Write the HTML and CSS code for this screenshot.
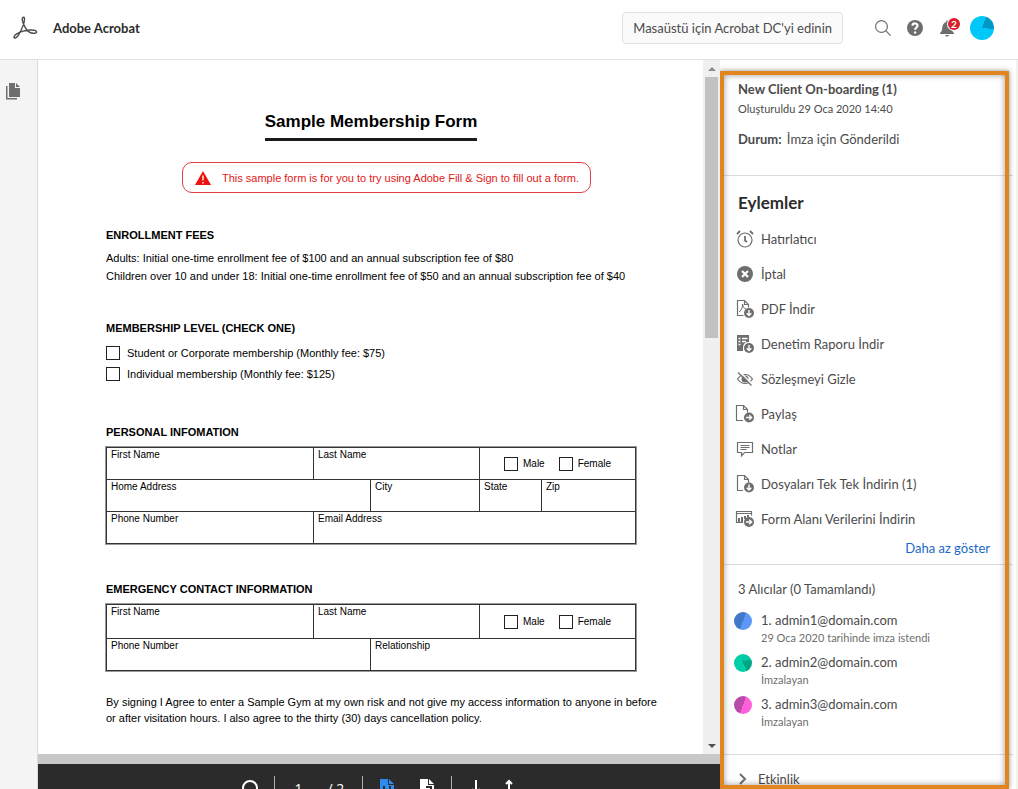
FILE: index.html
```html
<!DOCTYPE html>
<html lang="tr">
<head>
<meta charset="utf-8">
<meta name="viewport" content="width=device-width, initial-scale=1">
<title>Adobe Acrobat</title>
<link rel="stylesheet" href="styles.css">
</head>
<body>
<header class="topbar">
  <svg class="logo" viewBox="0 0 24 24" aria-hidden="true"><path d="M10.6 1.2c-1.5 0-1.7 2.1-.9 4.6.6 2 1.600 4.200 2.700 6 1.500 2.500 4.200 5 7.300 5.400 2.300.3 4-.2 3.900-1.300-.1-1.500-3-2-6.200-1.900-4.100.100-10 1.700-14.100 4.200-1.800 1.100-2.700 2.600-2.200 3.400.7 1 2.800-.1 4.500-2.800 2-3.200 4-7.400 5.200-11.400.6-2.200 1.300-6.200-.2-6.200z"/></svg>
  <span class="brand">Adobe Acrobat</span>
  <button class="get-app" type="button">Masaüstü için Acrobat DC'yi edinin</button>
  <button class="icon-btn" type="button" aria-label="Ara"><svg class="i18" viewBox="0 0 18 18"><g class="line"><circle cx="7.500" cy="7.500" r="5.900"/><path d="M11.700 11.700l5 5"/></g></svg></button>
  <button class="icon-btn" type="button" aria-label="Yardım"><svg class="i18" viewBox="0 0 18 18"><circle class="solid" cx="9" cy="9" r="8"/><path class="cut thick" d="M6.500 6.800c.1-3.200 5.200-3 5 0-.1 1.700-2.400 1.900-2.400 4"/><circle class="white" cx="9.100" cy="13.500" r="1.200"/></svg></button>
  <button class="icon-btn bell" type="button" aria-label="Bildirimler"><svg class="i18" viewBox="0 0 18 18"><path class="solid" d="M2 15v-1c1.500-1.300 2-2.300 2.200-5C4.400 5.500 6 3.300 8.200 2.900V1.600h1.600v1.300c2.200.4 3.700 2.600 3.900 6.100.2 2.700.8 3.700 2.300 5v1zM7.200 16h3.600c-.3 2-3.300 2-3.600 0z"/></svg><span class="badge">2</span></button>
  <button class="icon-btn" type="button" aria-label="Profil"><span class="avatar me"></span></button>
</header>
<main class="workspace">
  <nav class="rail">
    <button class="icon-btn" type="button" aria-label="Sayfalar"><svg class="i18" viewBox="0 0 18 18"><path class="solid" d="M2 4h1.500v12H13v1.500H2zM5 1h6v5h5v9H5zM12 1l4 4h-4z"/></svg></button>
  </nav>
  <section class="viewer">
    <div class="stage">
      <form class="sheet" lang="en">
        <h1 class="sheet-title"><span>Sample Membership Form</span></h1>
        <p class="notice"><svg class="warn" viewBox="0 0 18 16" aria-hidden="true"><path class="red" d="M9 1l8 14H1z"/><path class="cut" d="M9 5.500v5M9 12v1.500"/></svg>This sample form is for you to try using Adobe Fill &amp; Sign to fill out a form.</p>
        <h2>ENROLLMENT FEES</h2>
        <p class="fee">Adults: Initial one-time enrollment fee of $100 and an annual subscription fee of $80</p>
        <p class="fee">Children over 10 and under 18: Initial one-time enrollment fee of $50 and an annual subscription fee of $40</p>
        <h2 class="gap-s">MEMBERSHIP LEVEL (CHECK ONE)</h2>
        <label class="option"><input type="checkbox">Student or Corporate membership (Monthly fee: $75)</label>
        <label class="option"><input type="checkbox">Individual membership (Monthly fee: $125)</label>
        <h2 class="gap-l">PERSONAL INFOMATION</h2>
        <table class="fields">
          <colgroup><col class="c1"><col class="c2"><col class="c3"><col class="c4"><col class="c5"></colgroup>
          <tr><td><label for="p1">First Name</label><input id="p1" type="text"></td><td colspan="2"><label for="p2">Last Name</label><input id="p2" type="text"></td><td colspan="2" class="choice"><div class="pair"><label><input type="checkbox">Male</label><label><input type="checkbox">Female</label></div></td></tr>
          <tr><td colspan="2"><label for="p3">Home Address</label><input id="p3" type="text"></td><td><label for="p4">City</label><input id="p4" type="text"></td><td><label for="p5">State</label><input id="p5" type="text"></td><td><label for="p6">Zip</label><input id="p6" type="text"></td></tr>
          <tr><td><label for="p7">Phone Number</label><input id="p7" type="text"></td><td colspan="4"><label for="p8">Email Address</label><input id="p8" type="text"></td></tr>
        </table>
        <h2 class="gap-m">EMERGENCY CONTACT INFORMATION</h2>
        <table class="fields">
          <colgroup><col class="c1"><col class="c2"><col class="c3"><col class="c4"><col class="c5"></colgroup>
          <tr class="tall"><td><label for="e1">First Name</label><input id="e1" type="text"></td><td colspan="2"><label for="e2">Last Name</label><input id="e2" type="text"></td><td colspan="2" class="choice"><div class="pair"><label><input type="checkbox">Male</label><label><input type="checkbox">Female</label></div></td></tr>
          <tr><td colspan="2"><label for="e3">Phone Number</label><input id="e3" type="text"></td><td colspan="3"><label for="e4">Relationship</label><input id="e4" type="text"></td></tr>
        </table>
        <p class="terms">By signing I Agree to enter a Sample Gym at my own risk and not give my access information to anyone in before or after visitation hours. I also agree to the thirty (30) days cancellation policy.</p>
      </form>
      <div class="scroll"><span class="arrow up"></span><span class="thumb"></span><span class="arrow down"></span></div>
    </div>
    <div class="tools">
      <button type="button" aria-label="Bul"><svg class="i18" viewBox="0 0 18 18"><g class="wline"><circle cx="9" cy="9" r="7"/><path d="M14 14l4 4"/></g></svg></button>
      <span class="sep"></span>
      <span class="pages"><input type="text" value="1" aria-label="Sayfa"><span>/ 2</span></span>
      <span class="sep"></span>
      <button type="button" aria-label="Sayfayı sığdır"><svg class="i18" viewBox="0 0 18 18"><path class="blue" d="M2 0h8v6h6v12H2zM11 0l5 5h-5z"/><path class="darkline" d="M6 7v4M12 7v4"/></svg></button>
      <button class="wide" type="button" aria-label="Genişliğe sığdır"><svg class="i18" viewBox="0 0 18 18"><path class="white" d="M2 0h8v6h6v12H2zM11 0l5 5h-5z"/><path class="darkline" d="M8 8h5v5"/></svg></button>
      <span class="sep"></span>
      <button type="button" aria-label="Sonraki sayfa"><svg class="i18" viewBox="0 0 18 18"><path class="wline" d="M9 1v14M5 10l4 5 4-5"/></svg></button>
      <button type="button" aria-label="Önceki sayfa"><svg class="i18" viewBox="0 0 18 18"><path class="wline" d="M9 17V2M6 5l3-3 3 3"/></svg></button>
    </div>
  </section>
  <aside class="panel">
    <section class="block summary">
      <h2>New Client On-boarding (1)</h2>
      <p class="created">Oluşturuldu 29 Oca 2020 14:40</p>
      <p class="status"><strong>Durum:</strong> İmza için Gönderildi</p>
    </section>
    <section class="block actions">
      <h3>Eylemler</h3>
      <ul>
        <li><button type="button"><svg class="i18" viewBox="0 0 18 18"><g class="line"><circle cx="9" cy="10" r="7"/><path class="bold" d="M1 4l3-3M17 4l-3-3"/><path class="bold" d="M9 6v4.500l2 1.500"/></g></svg>Hatırlatıcı</button></li>
        <li><button type="button"><svg class="i18" viewBox="0 0 18 18"><circle class="solid" cx="9" cy="9" r="8"/><path class="cut thick" d="M6 6l6 6M12 6l-6 6"/></svg>İptal</button></li>
        <li><button type="button"><svg class="i18" viewBox="0 0 18 18"><path class="line" d="M7.500 15.500h-6V.5h7l4 4v3M8.500.5v4h4"/><path class="line thin" d="M3 12c2-1 4-5 3.500-8 .5 3 2 5 3.500 5"/><circle class="solid" cx="13" cy="13" r="5"/><path class="cut" d="M13 10v5.500M10.700 13.300l2.300 2.300 2.300-2.300"/></svg>PDF İndir</button></li>
        <li><button type="button"><svg class="i18" viewBox="0 0 18 18"><path class="solid" d="M1 0h12v7c-4 0-6 2-6 5.500V16H1z"/><path class="cut" d="M2.500 3.500h2M6 3.500h5.500M2.500 6.500h2M6 6.500h4M2.500 9.500h2"/><circle class="solid" cx="13" cy="13" r="5"/><path class="cut" d="M13 10v5.500M10.700 13.300l2.300 2.300 2.300-2.300"/></svg>Denetim Raporu İndir</button></li>
        <li><button type="button"><svg class="i18" viewBox="0 0 18 18"><path class="line" d="M1.500 9c4-6 11-6 15 0-4 6-11 6-15 0z"/><circle class="solid" cx="9" cy="9" r="3.500"/><path class="cut" d="M4 2l13 13"/><path class="line" d="M2 2.500l13.500 13"/></svg>Sözleşmeyi Gizle</button></li>
        <li><button type="button"><svg class="i18" viewBox="0 0 18 18"><path class="line" d="M7 15.500H.5V.5h7l4 4v3M7.500.5v4h4"/><circle class="solid" cx="13" cy="12.500" r="5"/><path class="cut" d="M10 12.500h5.500M13.300 10.200l2.300 2.300-2.300 2.300"/></svg>Paylaş</button></li>
        <li><button type="button"><svg class="i18" viewBox="0 0 18 18"><path class="line" d="M1.500 2.500h15v10h-8l-3 3.500v-3.500h-4zM4.500 5.500h9M4.500 7.500h9M4.500 9.500h6"/></svg>Notlar</button></li>
        <li><button type="button"><svg class="i18" viewBox="0 0 18 18"><path class="line" d="M7 15.500H1.500V.5h7l4 4v3M8.500.5v4h4"/><circle class="solid" cx="13" cy="12.500" r="5"/><path class="cut" d="M13 9.500V15M10.700 12.800l2.300 2.300 2.300-2.300"/></svg>Dosyaları Tek Tek İndirin (1)</button></li>
        <li><button type="button"><svg class="i18" viewBox="0 0 18 18"><path class="line" d="M7 12.500H.5v-11h15v4M.5 3.500h15"/><path class="solid" d="M2 8h2v4H2zM5 7h2v5H5zM8 6h2v3H8zM11 5h2v2h-2z"/><circle class="solid" cx="13" cy="12" r="5"/><path class="cut" d="M10 12h5.500M13.300 9.700l2.300 2.300-2.300 2.300"/></svg>Form Alanı Verilerini İndirin</button></li>
      </ul>
      <a class="less" href="#">Daha az göster</a>
    </section>
    <section class="block people">
      <h4>3 Alıcılar (0 Tamamlandı)</h4>
      <ol>
        <li><span class="avatar a1"></span><span>1. admin1@domain.com<small>29 Oca 2020 tarihinde imza istendi</small></span></li>
        <li><span class="avatar a2"></span><span>2. admin2@domain.com<small>İmzalayan</small></span></li>
        <li><span class="avatar a3"></span><span>3. admin3@domain.com<small>İmzalayan</small></span></li>
      </ol>
    </section>
    <section class="activity"><button type="button"><svg class="chev" viewBox="0 0 10 12"><path d="M2 1l5 5-5 5"/></svg>Etkinlik</button></section>
    <div class="highlight"></div>
  </aside>
</main>
</body>
</html>
```
FILE: styles.css
```css
* { box-sizing: border-box; margin: 0; padding: 0; }
body { height: 100vh; display: flex; flex-direction: column; overflow: hidden; background: #fff; color: #4b4b4b; font: 13px/20px Lato, "Open Sans", sans-serif; }
button { font: inherit; color: inherit; background: none; border: 0; }
ul, ol { list-style: none; }
svg { display: block; overflow: visible; }
.i18 { width: 18px; height: 18px; flex: none; }
.solid { fill: #6e6e6e; }
.white { fill: #fff; }
.red { fill: #f01010; }
.blue { fill: #2d8ceb; }
.line { fill: none; stroke: #6e6e6e; stroke-width: 1.2; }
.thin { stroke-width: 1; }
.bold { stroke-width: 1.800; }
.cut { fill: none; stroke: #fff; stroke-width: 1.400; }
.thick { stroke-width: 2.200; }
.wline { fill: none; stroke: #fff; stroke-width: 2; }
.darkline { fill: none; stroke: #2b2b2b; stroke-width: 2; }

.topbar { flex: none; height: 60px; display: flex; align-items: center; padding: 0 24px 4px 13px; border-bottom: 1px solid #e1e1e1; }
.logo { width: 24px; height: 24px; margin-right: 16px; fill: none; stroke: #4b4b4b; stroke-width: 1.400; }
.brand { flex: 1; color: #2c2c2c; font-weight: 700; }
.get-app { height: 32px; padding: 0 10px; margin-right: 31px; border: 1px solid #e1e1e1; border-radius: 4px; background: #fafafa; }
.topbar .icon-btn + .icon-btn { margin-left: 14px; }
.bell { position: relative; }
.badge { position: absolute; left: 10px; top: -1px; width: 12px; height: 12px; border-radius: 50%; background: #d7202a; color: #fff; font-size: 10px; font-weight: 700; line-height: 12px; box-shadow: 0 0 0 1px #fff; }
.avatar { display: block; flex: none; width: 18px; height: 18px; border-radius: 50%; }
.me { width: 24px; height: 24px; background: conic-gradient(from 20deg, #0099c6 0 75deg, #00c8f8 75deg); }
.a1 { background: linear-gradient(110deg, #4178c8 50%, #5c96f8 50%); }
.a2 { background: conic-gradient(from 80deg at 45% 40%, #00a586 0 75deg, #00d0a8 75deg 270deg, #00c8a0 270deg); }
.a3 { background: linear-gradient(110deg, #b84ba8 50%, #ff5fd8 50%); }

.workspace { flex: 1; min-height: 0; display: flex; }
.rail { flex: none; width: 38px; padding: 22px 4px; background: #f4f4f4; border-right: 1px solid #dcdcdc; }
.viewer { flex: 1; min-width: 0; display: flex; flex-direction: column; overflow: hidden; background: #c8c8c8; }
.stage { flex: 1; min-height: 0; display: flex; background: #fff; }
.sheet { flex: 1; min-width: 0; overflow: hidden; padding: 50px 67px 0 68px; color: #000; font: 11px/18px "Liberation Sans", Arial, sans-serif; }
.sheet-title { text-align: center; font-size: 17px; line-height: 24px; }
.sheet-title span { display: inline-block; padding-bottom: 4px; border-bottom: 3px solid #1c1c1c; }
.notice { display: flex; align-items: center; justify-content: center; width: fit-content; height: 31px; margin: 21px 45px 33px auto; padding: 0 11px; border: 1px solid #e04040; border-radius: 10px; color: #e01818; white-space: nowrap; }
.warn { width: 18px; height: 16px; margin-right: 10px; }
.sheet h2 { font-size: 11px; line-height: 18px; margin-bottom: 5px; }
.fee { white-space: nowrap; }
.sheet .gap-s { margin-top: 34px; }
.sheet .gap-m { margin-top: 36px; }
.sheet .gap-l { margin-top: 39px; }
.option { display: flex; align-items: center; gap: 7px; height: 21px; }
input[type="checkbox"] { appearance: none; flex: none; width: 14px; height: 14px; border: 1px solid #222; background: #fff; }
.fields { width: 100%; margin-top: 6px; table-layout: fixed; border-collapse: collapse; border: 1px solid #000; box-shadow: 0 0 0 1px rgba(0,0,0,.4); font-size: 10px; line-height: 12px; }
.c1 { width: 207px; }
.c2 { width: 57px; }
.c3 { width: 109px; }
.c4 { width: 62px; }
.c5 { width: 94px; }
.fields td { height: 32px; padding: 1px 4px; border: 1px solid #333; vertical-align: top; }
.fields .tall td { height: 34px; }
.fields td > label { display: block; }
.fields input[type="text"] { display: block; width: 100%; height: 16px; border: 0; background: none; font: inherit; }
.fields .choice { vertical-align: middle; }
.pair { display: flex; gap: 14px; padding-left: 20px; }
.pair label { display: flex; align-items: center; gap: 5px; }
.terms { margin: 23px -28px 0 0; line-height: 16px; }
.scroll { flex: none; width: 17px; display: flex; flex-direction: column; align-items: center; background: #f0f0f0; }
.thumb { width: 13px; height: 261px; background: #c1c1c1; }
.arrow { flex: none; width: 17px; height: 17px; display: grid; place-items: center; }
.arrow::before { content: ""; border: 4px solid transparent; border-top-width: 0; }
.up::before { border-bottom-color: #8c8c8c; }
.down { margin-top: auto; }
.down::before { border-width: 4px 4px 0; border-top-color: #505050; }
.tools { flex: none; height: 35px; padding: 12px 0 0; display: flex; justify-content: center; align-items: flex-start; gap: 15px; overflow: hidden; border-top: 10px solid #c8c8c8; background: #2b2b2b; color: #fff; }
.tools > * { flex: none; }
.tools button { padding-top: 3px; }
.tools .wide { margin-left: 7px; }
.sep { width: 1px; height: 24px; background: #b0b0b0; }
.pages { display: flex; align-items: center; gap: 20px; width: 57px; height: 26px; font-family: "Open Sans", sans-serif; font-size: 14px; white-space: nowrap; }
.pages input { width: 18px; text-align: center; border: 0; background: none; color: #fff; font: inherit; }

.panel { position: relative; flex: none; width: 298px; overflow: hidden; border-right: 2px solid #f2f2f2; }
.block { margin-right: 3px; padding: 0 20px 0 18px; border-bottom: 1px solid #dcdcdc; }
.summary { height: 116px; padding-top: 19px; }
.summary h2 { font-size: 13px; line-height: 20px; font-weight: 700; }
.created { font-size: 11px; }
.status { margin-top: 10px; }
.status strong { margin-right: 2px; font-weight: 700; }
.actions { padding-top: 14px; padding-bottom: 6px; }
.actions h3 { font-size: 17px; line-height: 26px; font-weight: 700; color: #2c2c2c; margin-bottom: 5px; }
.actions li button { display: flex; align-items: center; gap: 7px; height: 35px; margin-left: -2px; white-space: nowrap; }
.less { display: block; margin-top: 2px; margin-right: 3px; text-align: right; color: #2068c8; text-decoration: none; }
.people { padding-top: 14px; padding-bottom: 18px; }
.people h4 { font: inherit; margin-bottom: 11px; }
.people li { display: flex; gap: 9px; margin: 0 0 6px -4px; line-height: 20px; }
.people .avatar { margin-top: 2px; }
.people small { display: block; font-size: 11px; line-height: 16px; color: #6e6e6e; }
.activity { padding: 14px 18px; }
.activity button { display: flex; align-items: center; gap: 10px; }
.chev { width: 10px; height: 12px; fill: none; stroke: #6e6e6e; stroke-width: 2; }
.highlight { position: absolute; inset: 11px 7px 0 0; border: 4px solid #e2851f; box-shadow: 0 0 5px rgba(0,0,0,.45), inset 0 0 6px rgba(0,0,0,.4); pointer-events: none; }
```
